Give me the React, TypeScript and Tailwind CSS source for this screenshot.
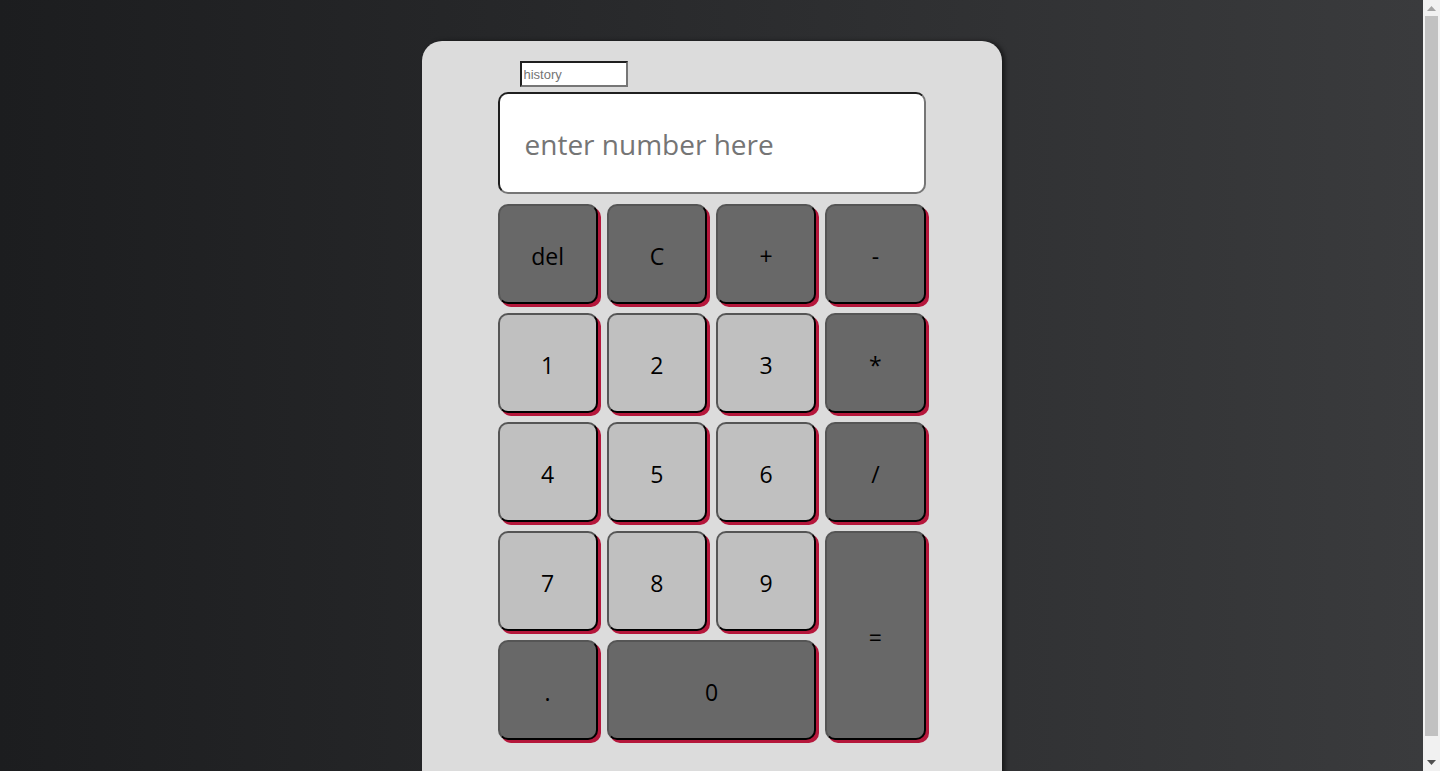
const keys = [
  { label: "del", tone: "dark", cls: "" },
  { label: "C", tone: "dark", cls: "" },
  { label: "+", tone: "dark", cls: "" },
  { label: "-", tone: "dark", cls: "" },
  { label: "1", tone: "light", cls: "" },
  { label: "2", tone: "light", cls: "" },
  { label: "3", tone: "light", cls: "" },
  { label: "*", tone: "dark", cls: "" },
  { label: "4", tone: "light", cls: "" },
  { label: "5", tone: "light", cls: "" },
  { label: "6", tone: "light", cls: "" },
  { label: "/", tone: "dark", cls: "" },
  { label: "7", tone: "light", cls: "" },
  { label: "8", tone: "light", cls: "" },
  { label: "9", tone: "light", cls: "" },
  { label: "=", tone: "dark", cls: "row-span-2" },
  { label: ".", tone: "dark", cls: "" },
  { label: "0", tone: "dark", cls: "col-span-2" },
];

function Scrollbar() {
  return (
    <div className="sticky top-0 flex h-screen w-[17px] shrink-0 flex-col items-center bg-[#f1f1f1]">
      <div className="flex h-[16px] items-center justify-center">
        <svg width="9" height="5" viewBox="0 0 9 5">
          <path d="M4.5 0 L9 5 L0 5 Z" fill="#a3a3a3" />
        </svg>
      </div>
      <div className="mb-[17px] w-[13px] flex-1 bg-[#c1c1c1]" />
      <div className="flex h-[18px] items-center justify-center">
        <svg width="9" height="5" viewBox="0 0 9 5">
          <path d="M0 0 L9 0 L4.5 5 Z" fill="#505050" />
        </svg>
      </div>
    </div>
  );
}

export default function App() {
  return (
    <div className="flex w-full items-start">
      <div className="min-h-screen flex-1 bg-gradient-to-r from-[#1c1d1f] to-[#3a3b3d] pt-[41px]">
        <div className="mx-auto flex w-[580px] flex-col items-center rounded-t-[20px] bg-[#dcdcdc] pb-[49px] pt-[20px] shadow-[3px_0_4px_rgba(0,0,0,0.5)]">
          <div className="w-[428px]">
            <input
              type="text"
              placeholder="history"
              className="ml-[22px] block h-[26px] w-[108px] border-2 border-t-[#1f1f1f] border-l-[#1f1f1f] border-b-[#767676] border-r-[#767676] bg-white px-[2px] pt-[1px] text-[13px] text-black outline-none placeholder-[#757575] font-['Liberation_Sans',Arial,sans-serif]"
            />
            <input
              type="text"
              placeholder="enter number here"
              className="mt-[5px] block h-[102px] w-[428px] rounded-[10px] border-2 border-t-[#1f1f1f] border-l-[#1f1f1f] border-b-[#767676] border-r-[#767676] bg-white px-[25px] pt-[2px] text-[28px] text-black outline-none placeholder-[#757575] font-['Open_Sans',sans-serif]"
            />
            <div className="mt-[10px] grid grid-cols-4 auto-rows-[100px] gap-[9px]">
              {keys.map((k) => (
                <button
                  key={k.label}
                  className={`${k.cls} ${k.tone === "dark" ? "bg-[#686868]" : "bg-[#c0c0c0]"} rounded-[10px] border-2 border-t-[#555555] border-l-[#555555] border-b-black border-r-black pt-[4px] text-[23px] text-black shadow-[3px_3px_0_#b5173b] font-['Open_Sans',sans-serif]`}
                >
                  {k.label}
                </button>
              ))}
            </div>
          </div>
        </div>
      </div>
      <Scrollbar />
    </div>
  );
}
